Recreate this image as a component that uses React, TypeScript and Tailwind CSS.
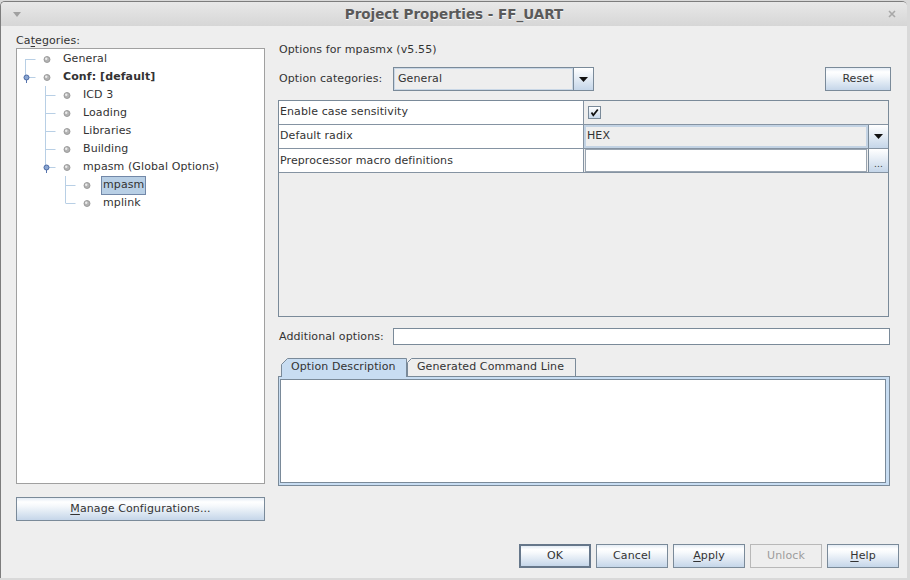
type TreeRow = {
  label: string
  level: 0 | 1 | 2
  bold?: boolean
  selected?: boolean
  v: [number, number, number]
  handle?: boolean
}

const rows: TreeRow[] = [
  { label: "General", level: 0, v: [8.5, 9, 18] },
  { label: "Conf: [default]", level: 0, bold: true, v: [8.5, 0, 9], handle: true },
  { label: "ICD 3", level: 1, v: [28.5, 0, 18] },
  { label: "Loading", level: 1, v: [28.5, 0, 18] },
  { label: "Libraries", level: 1, v: [28.5, 0, 18] },
  { label: "Building", level: 1, v: [28.5, 0, 18] },
  { label: "mpasm (Global Options)", level: 1, v: [28.5, 0, 9], handle: true },
  { label: "mpasm", level: 2, selected: true, v: [48.5, 0, 18] },
  { label: "mplink", level: 2, v: [48.5, 0, 9] },
]

const btn =
  "flex h-[24px] items-center justify-center border border-[#7a8a99] bg-[linear-gradient(#e4ecf5,#ffffff_18%,#f6f9fc_35%,#c5d6e9)] text-[#333]"

function Arrow() {
  return (
    <svg width="9" height="5" viewBox="0 0 9 5">
      <path d="M0 0h9l-4.5 5z" fill="#111" />
    </svg>
  )
}

function TreeLine({ row }: { row: TreeRow }) {
  const width = 44 + row.level * 20
  const [x, y1, y2] = row.v
  const bullet = 30 + row.level * 20
  return (
    <svg width={width} height="18" viewBox={`0 0 ${width} 18`} className="shrink-0">
      <line x1={x} y1={y1} x2={x} y2={y2} stroke="#b8cfe5" />
      <line x1={x} y1={9.5} x2={x + 10} y2={9.5} stroke="#b8cfe5" />
      {row.handle && (
        <g>
          <line x1={x + 1} y1={9} x2={x + 1} y2={15} stroke="#5673ad" />
          <circle cx={x + 1} cy={9.5} r={2.5} fill="#8aa6d2" stroke="#4a68a4" />
        </g>
      )}
      <circle cx={bullet} cy={9.5} r={3} fill="#b4b4b4" stroke="#8e8e8e" strokeWidth={0.8} />
      <circle cx={bullet - 0.8} cy={8.7} r={1.2} fill="#ececec" />
    </svg>
  )
}

export default function App() {
  return (
    <div className="h-[580px] w-[910px] overflow-hidden bg-[#d9d9d9] pt-[1px] text-[11px] leading-[14px] tracking-[0.1px] text-[#333] [font-family:'DejaVu_Sans',sans-serif]">
      <div className="flex h-[577px] w-[907px] flex-col overflow-hidden rounded-t-[5px] border-l border-t border-[#7d7d7d] bg-[#eeeeee]">
        {/* title bar */}
        <div className="flex h-[24px] shrink-0 items-center bg-[linear-gradient(#e8e8e8,#d6d6d6)]">
          <div className="flex w-[40px] pl-[12px]">
            <svg width="8" height="5" viewBox="0 0 8 5">
              <path d="M0 0h8l-4 5z" fill="#a0a0a0" />
            </svg>
          </div>
          <div className="flex-1 text-center text-[13.5px] font-bold tracking-normal text-[#5a5a5a] [text-shadow:0_1px_0_#f6f6f6]">
            Project Properties - FF_UART
          </div>
          <div className="flex w-[40px] justify-end pr-[11px]">
            <svg width="8" height="8" viewBox="0 0 8 8">
              <path d="M1 1l6 6M7 1l-6 6" stroke="#a8a8a8" strokeWidth="1.6" />
            </svg>
          </div>
        </div>

        {/* body */}
        <div className="flex flex-1 flex-col">
          <div className="flex">
            {/* left column */}
            <div className="ml-[15px] flex w-[249px] flex-col pt-[8px]">
              <div className="h-[14px]">
                Ca<span className="underline underline-offset-2">t</span>egories:
              </div>
              <div className="h-[436px] border border-[#a0a0a0] bg-white pt-[1px]">
                {rows.map((row) => (
                  <div key={row.label + row.level} className="flex h-[18px] items-center">
                    <TreeLine row={row} />
                    <span
                      className={
                        "h-[19px] border px-[1px] leading-[16px] " +
                        (row.selected ? "border-[#7288a8] bg-[#b8cfe5] " : "border-transparent ") +
                        (row.bold ? "font-bold" : "")
                      }
                    >
                      {row.label}
                    </span>
                  </div>
                ))}
              </div>
              <button className={btn + " mt-[13px] w-full"}>
                <span>
                  <span className="underline underline-offset-2">M</span>anage Configurations...
                </span>
              </button>
            </div>

            {/* right column */}
            <div className="ml-[13px] flex w-[613px] flex-col pt-[17px]">
              <div className="pl-[1px]">Options for mpasmx (v5.55)</div>

              <div className="mt-[10px] flex h-[24px] items-center">
                <div className="w-[115px] pl-[1px]">Option categories:</div>
                <div className="flex h-[24px] w-[201px] border border-[#7a8a99] bg-[#eeeeee]">
                  <div className="flex flex-1 items-center border border-[#c9d7e6] pl-[3px]">General</div>
                  <div className="flex w-[20px] items-center justify-center border-l border-[#7a8a99] bg-[linear-gradient(#ffffff,#c5d6e9)]">
                    <Arrow />
                  </div>
                </div>
                <button className={btn + " ml-auto w-[66px]"}>Reset</button>
              </div>

              {/* property table */}
              <div className="mt-[9px] flex h-[217px] w-[611px] flex-col border border-[#7a8a99] bg-[#eeeeee]">
                <div className="flex h-[24px] border-b border-[#8593a2]">
                  <div className="flex w-[305px] items-center border-r border-[#8593a2] bg-white pb-[2px] pl-[1px]">
                    Enable case sensitivity
                  </div>
                  <div className="flex flex-1 items-center pl-[4px]">
                    <div className="flex h-[13px] w-[13px] items-center justify-center border border-[#7a8a99] bg-[linear-gradient(#ffffff,#c8d9ec)]">
                      <svg width="9" height="9" viewBox="0 0 9 9">
                        <path d="M1.5 4.5L3.3 7.2L7.8 1.5" fill="none" stroke="#111" strokeWidth="1.8" />
                      </svg>
                    </div>
                  </div>
                </div>
                <div className="flex h-[24px] border-b border-[#8593a2]">
                  <div className="flex w-[305px] items-center border-r border-[#8593a2] bg-white pb-[2px] pl-[1px]">
                    Default radix
                  </div>
                  <div className="flex flex-1">
                    <div className="flex flex-1 items-center border-2 border-[#c3d3e4] pb-[1px] pl-[1px]">HEX</div>
                    <div className="flex w-[20px] items-center justify-center border-l border-[#7a8a99] bg-[linear-gradient(#ffffff,#c5d6e9)]">
                      <Arrow />
                    </div>
                  </div>
                </div>
                <div className="flex h-[24px] border-b border-[#8593a2]">
                  <div className="flex w-[305px] items-center border-r border-[#8593a2] bg-white pl-[1px]">
                    Preprocessor macro definitions
                  </div>
                  <div className="flex flex-1 pl-[1px]">
                    <div className="flex-1 border border-[#9aa5b1] bg-white" />
                    <div className="ml-[1px] flex w-[20px] items-end justify-center border-l border-[#7a8a99] bg-[linear-gradient(#ffffff,#c5d6e9)] pb-[3px] text-[9px] leading-[9px]">
                      ...
                    </div>
                  </div>
                </div>
              </div>

              <div className="mt-[11px] flex h-[17px] items-center">
                <div className="w-[115px] pl-[1px]">Additional options:</div>
                <div className="h-[17px] w-[497px] border border-[#7a8a99] bg-white" />
              </div>

              {/* tabs */}
              <div className="mt-[13px] flex h-[18px] pl-[3px]">
                <div className="relative flex w-[126px] items-center pb-[1px] pl-[10px]">
                  <svg className="absolute inset-0" width="126" height="19" viewBox="0 0 126 19">
                    <path d="M0.5 19V6.5L6.5 0.5H125.5V19" fill="#c8ddf2" stroke="#7a8a99" />
                  </svg>
                  <span className="relative">Option Description</span>
                </div>
                <div className="relative flex w-[169px] items-center pb-[1px] pl-[10px]">
                  <svg className="absolute inset-0" width="169" height="18" viewBox="0 0 169 18">
                    <path d="M0.5 18V4.5L4.5 0.5H168.5V18" fill="#eeeeee" stroke="#7a8a99" />
                  </svg>
                  <span className="relative">Generated Command Line</span>
                </div>
              </div>
              <div className="h-[110px] w-[612px] border border-[#7a8a99] bg-[#c8ddf2] pt-[2px] pr-[3px] pb-[2px] pl-[1px]">
                <div className="h-full border border-[#7a8a99] bg-white" />
              </div>
            </div>
          </div>

          {/* dialog buttons */}
          <div className="mt-auto flex justify-end gap-[5px] pr-[8px] pb-[10px]">
            <button className={btn + " w-[72px] border-2 border-[#66778a]"}>OK</button>
            <button className={btn + " w-[72px]"}>Cancel</button>
            <button className={btn + " w-[72px]"}>
              <span>
                <span className="underline underline-offset-2">A</span>pply
              </span>
            </button>
            <button className="flex h-[24px] w-[72px] items-center justify-center border border-[#b8b8b8] bg-[#eeeeee] text-[#9c9c9c]">
              Unlock
            </button>
            <button className={btn + " w-[72px]"}>
              <span>
                <span className="underline underline-offset-2">H</span>elp
              </span>
            </button>
          </div>
        </div>
      </div>
    </div>
  )
}
